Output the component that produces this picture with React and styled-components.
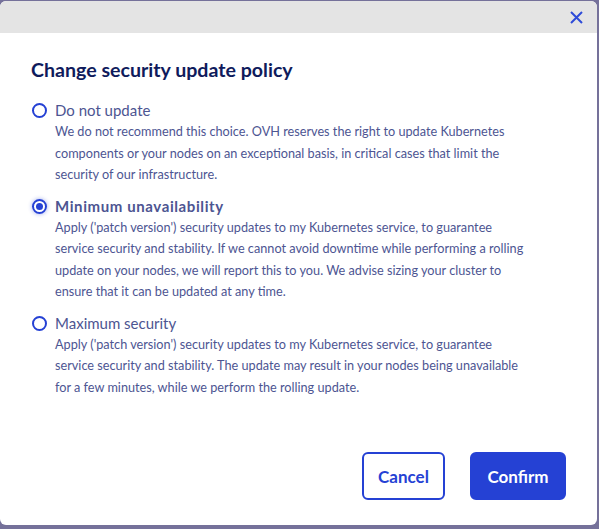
import React, { useState } from "react"
import styled, { createGlobalStyle } from "styled-components"

const Global = createGlobalStyle`
  html, body {
    margin: 0;
    padding: 0;
    background: #75719a;
  }
  body {
    font-family: 'Lato', 'Liberation Sans', sans-serif;
  }
`

const Backdrop = styled.div`
  width: 599px;
  height: 529px;
  box-sizing: border-box;
  padding-top: 1px;
  background: #75719a;
  border-top: 1px solid #8e8c9c;
  margin-top: -1px;
`

const Modal = styled.div`
  width: 597px;
  height: 524px;
  background: #fff;
  border-radius: 6px;
  overflow: hidden;
  display: flex;
  flex-direction: column;
`

const Header = styled.div`
  height: 32px;
  background: #e4e4e4;
  display: flex;
  justify-content: flex-end;
  align-items: center;
  padding-right: 13px;
`

const CloseButton = styled.button`
  border: none;
  background: none;
  padding: 0;
  width: 16px;
  height: 16px;
  display: flex;
  align-items: center;
  justify-content: center;
  cursor: pointer;
`

const Body = styled.div`
  flex: 1;
  padding: 25px 31px 0 31px;
  display: flex;
  flex-direction: column;
`

const Title = styled.h2`
  margin: 0 0 18px 0;
  font-size: 19.6px;
  font-weight: 700;
  color: #0f1b5c;
`

const Options = styled.div`
  display: flex;
  flex-direction: column;
  gap: 9px;
`

const Option = styled.label`
  display: grid;
  grid-template-columns: 16px 1fr;
  column-gap: 8px;
  cursor: pointer;
`

const Radio = styled.span`
  width: 15px;
  height: 15px;
  box-sizing: border-box;
  border-radius: 50%;
  border: 2px solid #2541d4;
  margin-top: 4px;
  margin-left: 1px;
  display: flex;
  align-items: center;
  justify-content: center;
  box-shadow: ${p => (p.$checked ? "0 0 4px rgba(37, 65, 212, 0.45)" : "none")};
  &::after {
    content: "";
    width: 7px;
    height: 7px;
    border-radius: 50%;
    background: ${p => (p.$checked ? "#2541d4" : "transparent")};
  }
`

const OptionLabel = styled.div`
  font-size: 15px;
  line-height: 22px;
  color: #4d5592;
  font-weight: ${p => (p.$checked ? 700 : 400)};
  letter-spacing: ${p => (p.$checked ? "0.6px" : "0")};
`

const Description = styled.div`
  grid-column: 2;
  font-size: 12.7px;
  line-height: 21.5px;
  color: #4d5592;
  white-space: nowrap;
`

const Line = styled.div``

const Footer = styled.div`
  display: flex;
  justify-content: flex-end;
  gap: 25px;
  padding: 0 31px 25px 0;
`

const Button = styled.button`
  height: 48px;
  box-sizing: border-box;
  border-radius: 6px;
  font-family: 'Lato', 'Liberation Sans', sans-serif;
  font-size: 17px;
  font-weight: 700;
  padding: 0 14px;
  cursor: pointer;
  border: 2px solid #2541d4;
  background: ${p => (p.$primary ? "#2541d4" : "#fff")};
  color: ${p => (p.$primary ? "#fff" : "#2541d4")};
  min-width: ${p => (p.$primary ? "96px" : "83px")};
`

const options = [
  {
    id: "none",
    label: "Do not update",
    lines: [
      "We do not recommend this choice. OVH reserves the right to update Kubernetes",
      "components or your nodes on an exceptional basis, in critical cases that limit the",
      "security of our infrastructure.",
    ],
  },
  {
    id: "min",
    label: "Minimum unavailability",
    lines: [
      "Apply ('patch version') security updates to my Kubernetes service, to guarantee",
      "service security and stability. If we cannot avoid downtime while performing a rolling",
      "update on your nodes, we will report this to you. We advise sizing your cluster to",
      "ensure that it can be updated at any time.",
    ],
  },
  {
    id: "max",
    label: "Maximum security",
    lines: [
      "Apply ('patch version') security updates to my Kubernetes service, to guarantee",
      "service security and stability. The update may result in your nodes being unavailable",
      "for a few minutes, while we perform the rolling update.",
    ],
  },
]

const App = () => {
  const [selected, setSelected] = useState("min")

  return (
    <>
      <Global />
      <Backdrop>
        <Modal>
          <Header>
            <CloseButton aria-label="Close">
              <svg width="13" height="13" viewBox="0 0 13 13">
                <path d="M1 1 L12 12 M12 1 L1 12" stroke="#2e4bd8" strokeWidth="2" fill="none" />
              </svg>
            </CloseButton>
          </Header>
          <Body>
            <Title>Change security update policy</Title>
            <Options>
              {options.map(o => {
                const checked = selected === o.id
                return (
                  <Option key={o.id} onClick={() => setSelected(o.id)}>
                    <Radio $checked={checked} />
                    <OptionLabel $checked={checked}>{o.label}</OptionLabel>
                    <Description>
                      {o.lines.map(l => (
                        <Line key={l}>{l}</Line>
                      ))}
                    </Description>
                  </Option>
                )
              })}
            </Options>
          </Body>
          <Footer>
            <Button>Cancel</Button>
            <Button $primary>Confirm</Button>
          </Footer>
        </Modal>
      </Backdrop>
    </>
  )
}

export default App
